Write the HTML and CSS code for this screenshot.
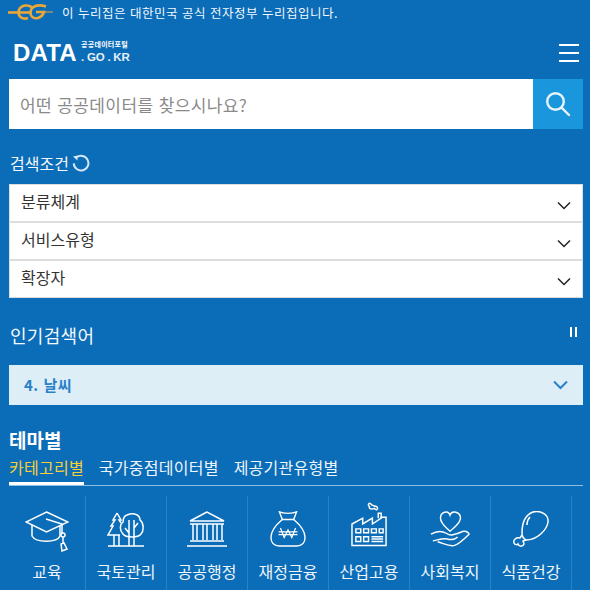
FILE: index.html
```html
<!DOCTYPE html>
<html lang="ko">
<head>
    <meta charset="UTF-8">
    <meta name="viewport" content="width=device-width, initial-scale=1.0">
    <title>공공데이터포털</title>
    <link rel="stylesheet" href="styles.css">
</head>
<body>
    <div class="gov-strip">
        <svg class="gov-logo" viewBox="0 0 46 16" width="46" height="16" fill="none" stroke="#e9a63a" stroke-width="2.6">
            <path d="M0 8.5H24"/>
            <path d="M24 3.5C21 0.5 13 0.5 11 6C9 12 14 16 20 14"/>
            <path d="M38 2.5C32 0.5 25 1 23 6C21 12 25 15 30 14C33 13 35 11 36 8H28"/>
            <path d="M36 8H45" stroke-width="1"/>
        </svg>
        <span>이 누리집은 대한민국 공식 전자정부 누리집입니다.</span>
    </div>

    <header class="top-bar">
        <div class="logo">
            <span class="logo-data">DATA</span>
            <span class="logo-side">
                <span class="logo-small">공공데이터포털</span>
                <span class="logo-domain">. GO . KR</span>
            </span>
        </div>
        <div class="menu-btn"><i></i><i></i><i></i></div>
    </header>

    <div class="search-box">
        <div class="search-input">어떤 공공데이터를 찾으시나요?</div>
        <div class="search-btn">
            <svg viewBox="0 0 26 26" width="26" height="26" fill="none" stroke="#e8f4fc" stroke-width="2.4">
                <circle cx="10.5" cy="10.5" r="8.3"/>
                <path d="M16.8 16.8L24 24" stroke-linecap="round"/>
            </svg>
        </div>
    </div>

    <div class="cond-title">
        검색조건
        <svg viewBox="0 0 18 18" width="18" height="18" fill="none" stroke="#d5e8f6" stroke-width="2">
            <path d="M4.4 3.6A7.3 7.3 0 1 1 1.8 9.4"/>
            <path d="M1 2.6L5.6 1.4L5.4 6.4Z" fill="#d5e8f6" stroke="none"/>
        </svg>
    </div>

    <div class="select-list">
        <div class="select-row">분류체계<svg class="chev" viewBox="0 0 14 9" width="14" height="9"><path d="M1 1.5L7 7.5L13 1.5"/></svg></div>
        <div class="select-row">서비스유형<svg class="chev" viewBox="0 0 14 9" width="14" height="9"><path d="M1 1.5L7 7.5L13 1.5"/></svg></div>
        <div class="select-row">확장자<svg class="chev" viewBox="0 0 14 9" width="14" height="9"><path d="M1 1.5L7 7.5L13 1.5"/></svg></div>
    </div>

    <div class="popular-head">
        <span>인기검색어</span>
        <span class="pause"><i></i><i></i></span>
    </div>
    <div class="popular-box">
        <span>4. 날씨</span>
        <svg viewBox="0 0 15 10" width="15" height="10" fill="none" stroke="#2a80c8" stroke-width="2"><path d="M1 1.5L7.5 8L14 1.5"/></svg>
    </div>

    <h2 class="theme-title">테마별</h2>
    <div class="tabs">
        <span class="tab active">카테고리별</span>
        <span class="tab">국가중점데이터별</span>
        <span class="tab">제공기관유형별</span>
    </div>

    <div class="cats">
        <div class="cat first">
            <svg class="ico-cap" viewBox="0 0 44 41" width="44" height="41">
                <path d="M21.5 1L43 11L21.5 21L1 11Z"/>
                <path d="M7 14V25C11 32 32 32 35 25V14"/>
                <path d="M21 8L37 13V22"/>
                <circle cx="38" cy="24" r="2"/>
                <path d="M38 26V32M36 33L37 40L42 38L39 32Z"/>
            </svg>
            <span>교육</span>
        </div>
        <div class="cat">
            <svg viewBox="0 0 38 35" width="38" height="35">
                <path d="M1 34H37"/>
                <path d="M10 1L14 8H12L14 11M10 1L6 8H8L4 14H6L1 23H13M7 23V34M12 23V34"/>
                <path d="M20 3C27 0 33 3 33 8C37 11 37 19 34 22C31 26 19 26 16 22C12 18 13 12 16 10C16 7 17 4 20 3Z"/>
                <path d="M22 8V34M27 8V34M22 21L18 16M27 16L31 11"/>
            </svg>
            <span>국토관리</span>
        </div>
        <div class="cat">
            <svg viewBox="0 0 42 36" width="42" height="36">
                <path d="M21 1L4 10H38ZM4 13H38"/>
                <path d="M7 13V29M11 13V29M17 13V29M21 13V29M27 13V29M31 13V29M36 13V29"/>
                <path d="M4 30H38M1 35H41"/>
            </svg>
            <span>공공행정</span>
        </div>
        <div class="cat">
            <svg viewBox="0 0 38 38" width="36" height="36">
                <path d="M10 1C14 3 24 3 28 1L25 9H13Z"/>
                <path d="M13 9C7 14 1 20 1 28C1 33 4 37 10 37H28C34 37 37 33 37 28C37 20 31 14 25 9"/>
                <path d="M11 18L15 28L19 20L23 28L27 18M9 22H29M9 25H29" stroke-width="1.3"/>
            </svg>
            <span>재정금융</span>
        </div>
        <div class="cat">
            <svg viewBox="0 0 38 46" width="37" height="46">
                <path d="M1 45V23L12 17V23L22 17V23L31 17V16H36V45Z"/>
                <path d="M28 17V12H31V17"/>
                <path d="M20 2C18 1 17 4 19 5C18 8 22 8 24 7C26 10 29 7 26 5C24 4 22 5 20 2Z"/>
                <path d="M5 28H10V32H5ZM13 28H18V32H13ZM21 28H26V32H21ZM29 28H33V32H29ZM5 36H10V41H5ZM13 36H18V41H13Z"/>
                <path d="M21 36H33M21 38.5H33M21 41H33"/>
            </svg>
            <span>산업고용</span>
        </div>
        <div class="cat">
            <svg viewBox="0 0 42 39" width="40" height="38">
                <path d="M21 23C17 19 11 15 11 9C11 3 19 0 21 6C23 0 32 3 32 9C32 15 25 19 21 23Z"/>
                <path d="M1 26C6 23 12 22 17 25C20 27 24 27 26 26C29 26 33 23 36 23C39 23 41 25 41 26C36 31 30 37 25 38C20 39 15 36 8 34"/>
                <path d="M3 33C8 32 14 30 18 31C22 32 26 32 29 29"/>
            </svg>
            <span>사회복지</span>
        </div>
        <div class="cat">
            <svg viewBox="0 0 36 36" width="36" height="36">
                <path d="M9 22C9 12 12 4 20 1C28 -1 36 4 35 11C34 19 24 29 13 29C11 28 9 25 9 22Z"/>
                <path d="M17 6C15 8 14 11 14 14"/>
                <path d="M9 24L7 27C3 26 0 29 1 32C2 34 4 34 5 33C6 36 10 36 11 33C11 31 10 31 10 30L13 29"/>
            </svg>
            <span>식품건강</span>
        </div>
        <div class="cat rest"></div>
    </div>
</body>
</html>
```

FILE: styles.css
```css
* {
    margin: 0;
    padding: 0;
    box-sizing: border-box;
}

html, body {
    height: 590px;
    overflow: hidden;
}

body {
    font-family: "Noto Sans CJK KR", "Noto Sans", sans-serif;
    background: #0b6cb8;
    color: #fff;
    padding: 0 7px 0 9px;
}

.gov-strip {
    display: flex;
    align-items: center;
    height: 24px;
    margin-left: -1px;
    font-size: 12.5px;
    letter-spacing: 0.5px;
    gap: 8px;
    color: #f2f8fc;
}

.gov-logo {
    flex: none;
}

.top-bar {
    display: flex;
    align-items: center;
    justify-content: space-between;
    height: 55px;
    padding: 2px 4px 0 4px;
}

.logo {
    display: flex;
    align-items: center;
    gap: 4px;
}

.logo-data {
    font-family: "Liberation Sans", sans-serif;
    font-weight: 700;
    font-size: 24px;
    letter-spacing: 0.2px;
    line-height: 24px;
}

.logo-side {
    display: flex;
    flex-direction: column;
    line-height: 1;
}

.logo-small {
    font-size: 7px;
    font-weight: 700;
    letter-spacing: 0.3px;
    height: 11px;
}

.logo-domain {
    font-family: "Liberation Sans", sans-serif;
    font-size: 11.5px;
    font-weight: 700;
    letter-spacing: -0.2px;
    color: #e6f1f9;
}

.menu-btn {
    display: flex;
    flex-direction: column;
    gap: 6px;
    width: 20px;
}

.menu-btn i {
    display: block;
    height: 2px;
    background: #fff;
}

.search-box {
    display: flex;
    height: 50px;
    background: #fff;
}

.search-input {
    flex: 1;
    display: flex;
    align-items: center;
    padding-left: 11px;
    font-size: 17px;
    letter-spacing: 0.4px;
    color: #8a8a8a;
}

.search-btn {
    display: flex;
    align-items: center;
    justify-content: center;
    width: 50px;
    background: #1a96dc;
}

.cond-title {
    display: flex;
    align-items: center;
    gap: 3px;
    height: 55px;
    padding-top: 16px;
    padding-bottom: 4px;
    padding-left: 1px;
    font-size: 16px;
    color: #f2f8fc;
}

.select-list {
    background: #fff;
}

.select-row {
    display: flex;
    align-items: center;
    justify-content: space-between;
    height: 38px;
    padding: 0 11px 4px 11px;
    font-size: 16px;
    line-height: 20px;
    color: #333;
    border: 1px solid #ddd;
}

.chev {
    fill: none;
    stroke: #222;
    stroke-width: 1.5;
    margin-top: 8px;
}

.popular-head {
    display: flex;
    align-items: center;
    justify-content: space-between;
    height: 67px;
    padding: 6px 6px 0 1px;
    font-size: 18px;
    letter-spacing: 0.3px;
    color: #f2f8fc;
}

.pause {
    display: flex;
    gap: 3px;
    margin-top: -6px;
}

.pause i {
    display: block;
    width: 2px;
    height: 10px;
    background: #fff;
}

.popular-box {
    display: flex;
    align-items: center;
    justify-content: space-between;
    height: 40px;
    padding: 0 15px 1px;
    background: #deeef7;
    color: #2a80c8;
    font-size: 15px;
    letter-spacing: 0.5px;
    font-weight: 700;
}

.theme-title {
    margin-top: 22px;
    font-size: 19px;
    font-weight: 700;
    line-height: 26px;
}

.tabs {
    display: flex;
    gap: 15px;
    height: 32px;
    border-bottom: 1px solid #8fc0e3;
    font-size: 16px;
    letter-spacing: 0.25px;
    line-height: 26px;
    margin-top: 1px;
}

.tab {
    height: 31px;
    color: #eef6fb;
}

.tab.active {
    color: #f5cf3a;
    border-bottom: 3px solid #fff;
}

.cats {
    display: flex;
    margin-top: 10px;
    margin-left: -9px;
    margin-right: -7px;
}

.cat {
    flex: none;
    display: flex;
    flex-direction: column;
    align-items: center;
    justify-content: flex-end;
    width: 81px;
    height: 94px;
    padding-bottom: 9px;
    border-right: 1px solid #2d80c1;
    font-size: 16px;
    color: #eef6fb;
}

.cat.first {
    width: 86px;
    padding-left: 9px;
}

.cat.rest {
    width: 18px;
    border-right: none;
}

.cat svg {
    fill: none;
    stroke: #fff;
    stroke-width: 1.5;
    margin-bottom: 14px;
}

.cat svg.ico-cap {
    margin-bottom: 9px;
}

.cat span {
    line-height: 20px;
}
```
